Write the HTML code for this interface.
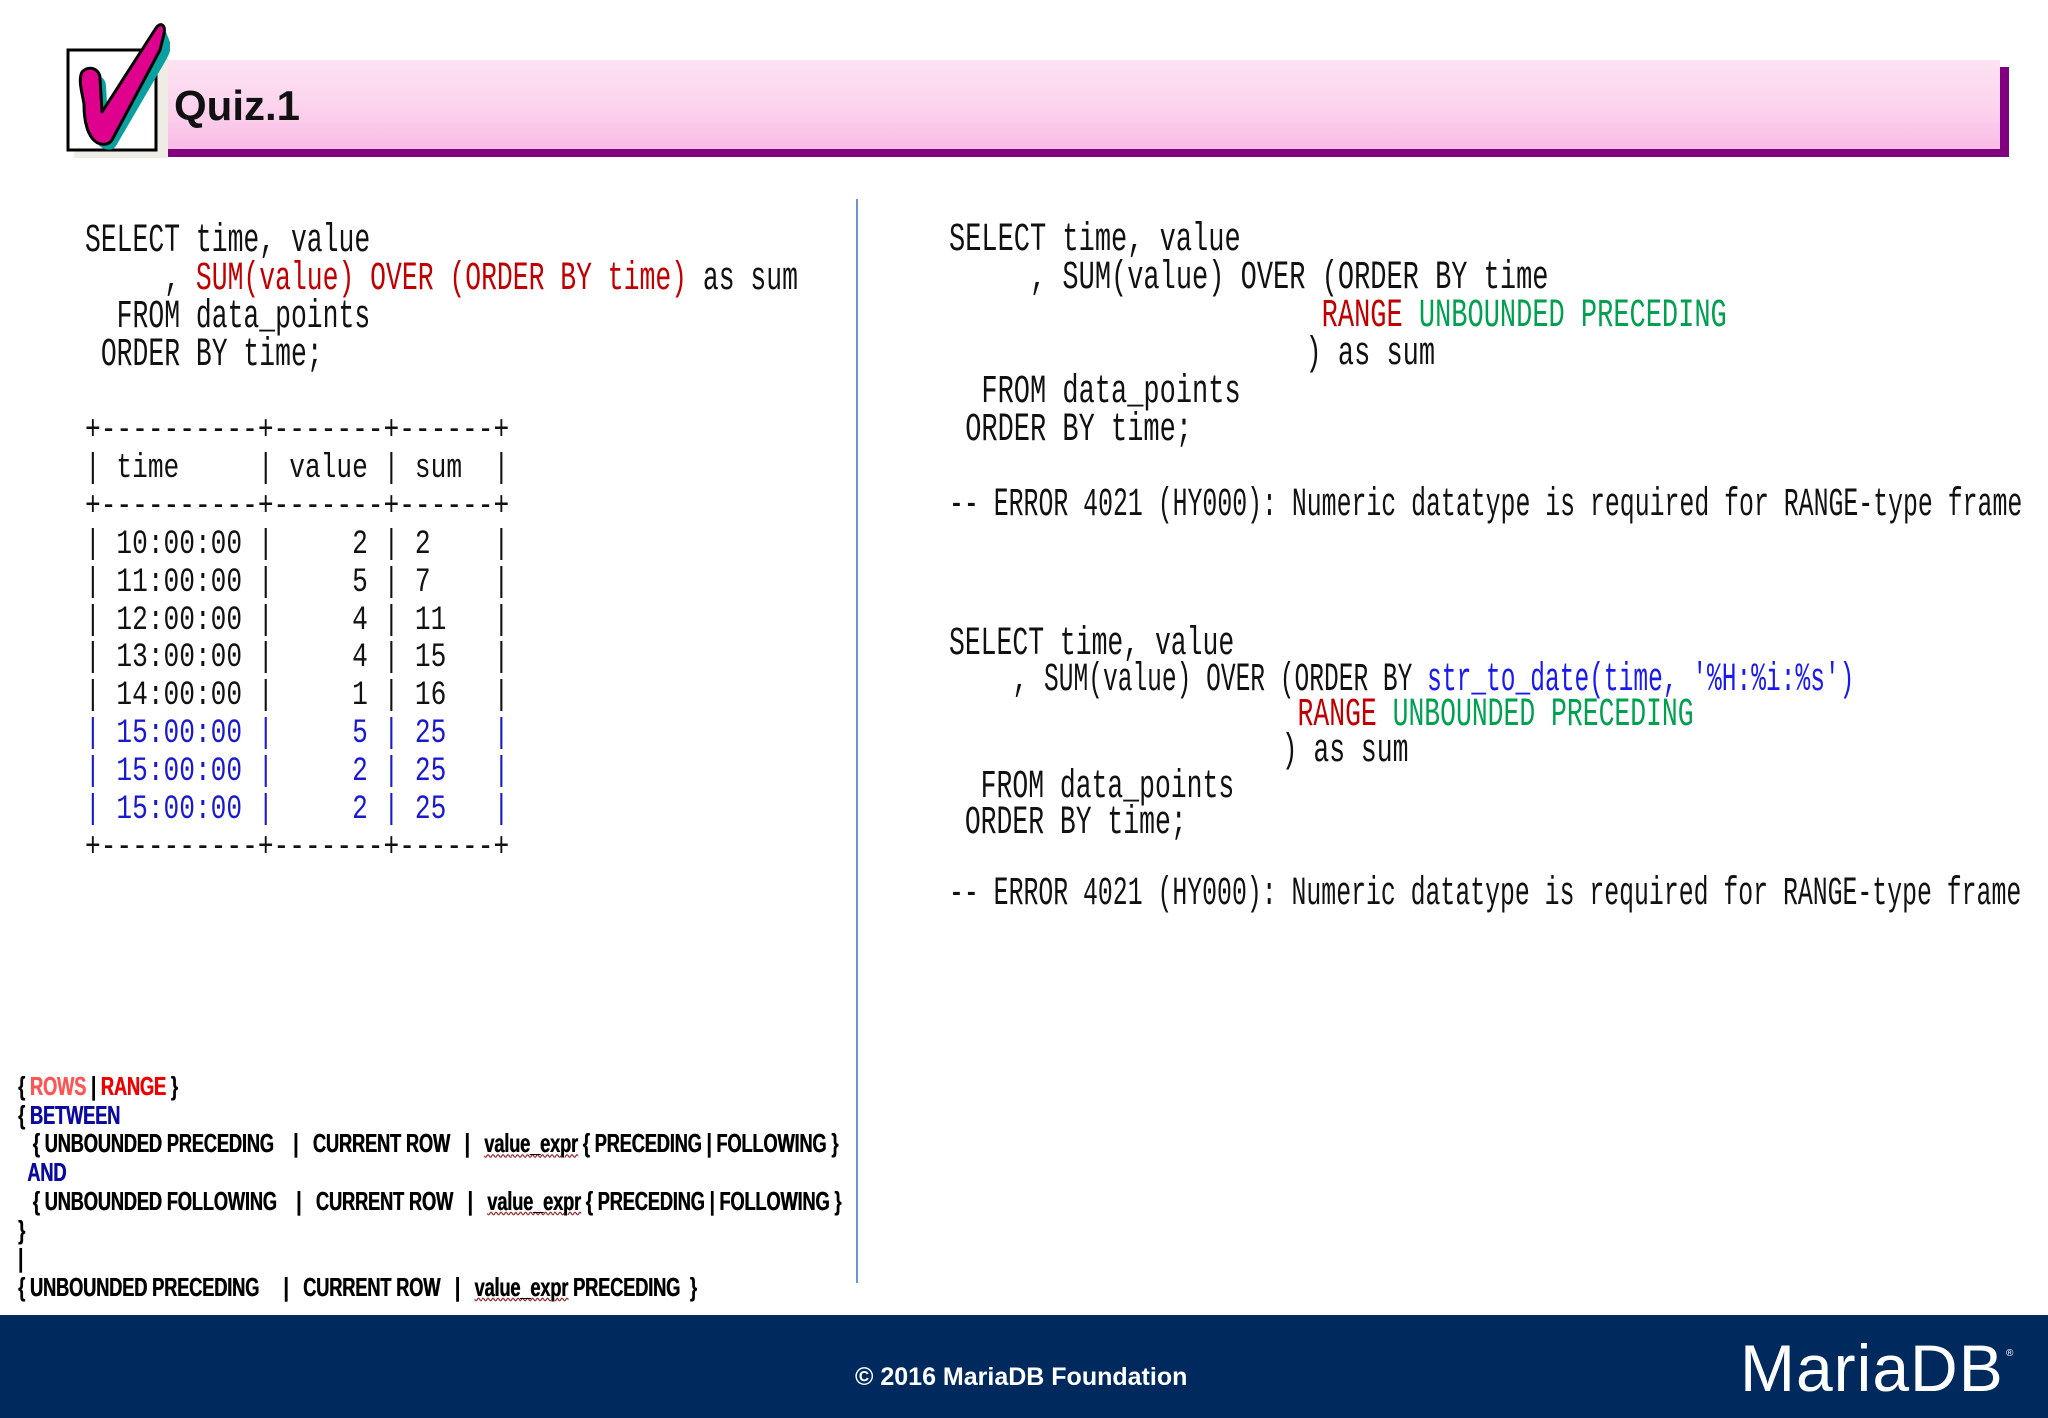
<!DOCTYPE html>
<html><head><meta charset="utf-8"><style>
html,body{margin:0;padding:0;background:#fff;}
body{width:2048px;height:1418px;position:relative;overflow:hidden;font-family:"Liberation Sans",sans-serif;}
.abs{position:absolute;}
pre{margin:0;font-family:"Liberation Mono","Noto Sans CJK SC",monospace;color:#111;white-space:pre;transform-origin:0 0;}
.code{font-size:40px;line-height:37.9px;transform:scaleX(0.66);}
.code1{font-size:40px;line-height:37.9px;transform:scaleX(0.675);}
.code2{font-size:40px;line-height:35.7px;transform:scaleX(0.66);}
.tbl{font-size:34px;line-height:37.9px;transform:scaleX(0.77);font-family:"Liberation Mono",monospace;}
.r{color:#c00000}.g{color:#00a050}.b{color:#1a1aee}.tb{color:#1a1acc}
.syn{font-family:"Liberation Sans",sans-serif;font-weight:bold;font-size:26px;line-height:28.7px;transform:scaleX(0.705);transform-origin:0 0;white-space:pre;color:#000;letter-spacing:-0.3px;text-shadow:0.6px 0 0 currentColor}
.u{text-decoration:underline;text-decoration-color:#c33;text-decoration-style:wavy;text-decoration-thickness:1px}
</style></head><body>

<div class="abs" style="left:160px;top:67px;width:1849px;height:90px;background:#800080;"></div>
<div class="abs" style="left:154px;top:60px;width:1846px;height:89px;background:linear-gradient(#fde2f2,#fcd6ee 45%,#f9bde6);"></div>
<div class="abs" style="left:174px;top:82px;font-size:42px;font-weight:bold;color:#111;">Quiz.1</div>
<svg class="abs" style="left:20px;top:20px" width="150" height="140" viewBox="0 0 150 140">
  <rect x="54" y="38" width="94" height="100" fill="#eeece4"/>
  <rect x="48" y="30" width="88" height="100" fill="#fff" stroke="#000" stroke-width="3"/>
  <path d="M70 60 C78 52 86 58 86 66 L88 100 L146 12 L150 22 C152 30 148 36 146 40 L96 126 C92 132 82 130 78 124 C72 116 72 100 72 90 Z" fill="#0aa0a0"/>
  <path d="M62 52 C70 44 80 50 80 58 L82 92 L136 8 C140 2 146 4 144 14 L140 30 L92 120 C88 126 78 126 72 118 C66 110 64 96 64 84 C62 72 58 60 62 52 Z" fill="#e0008e" stroke="#000" stroke-width="3" stroke-linejoin="round"/>
</svg>

<div class="abs" style="left:856px;top:199px;width:2px;height:1084px;background:#6b95cf;"></div>

<pre class="abs code" style="left:85px;top:223px;">SELECT time, value
     , <span class="r">SUM(value) OVER (ORDER BY time)</span> as sum
  FROM data_points
 ORDER BY time;</pre>
<pre class="abs tbl" style="left:85px;top:413px;">+----------+-------+------+
| time     | value | sum  |
+----------+-------+------+
| 10:00:00 |     2 | 2    |
| 11:00:00 |     5 | 7    |
| 12:00:00 |     4 | 11   |
| 13:00:00 |     4 | 15   |
| 14:00:00 |     1 | 16   |
<span class="tb">| 15:00:00 |     5 | 25   |
| 15:00:00 |     2 | 25   |
| 15:00:00 |     2 | 25   |</span>
+----------+-------+------+</pre>

<pre class="abs code1" style="left:949px;top:222px;">SELECT time, value
     , SUM(value) OVER (ORDER BY time
                       <span class="r">RANGE</span> <span class="g">UNBOUNDED PRECEDING</span>
                      ) as sum
  FROM data_points
 ORDER BY time;

<span style="display:inline-block;transform:scaleX(0.92);transform-origin:0 0">-- ERROR 4021 (HY000): Numeric datatype is required for RANGE-type frame</span></pre>

<pre class="abs code2" style="left:949px;top:627px;">SELECT time, value
    , <span style="display:inline-block;transform:scaleX(0.93);transform-origin:0 0">SUM(value) OVER (ORDER BY <span class="b">str_to_date(time, '%H:%i:%s')</span></span>
                      <span class="r">RANGE</span> <span class="g">UNBOUNDED PRECEDING</span>
                     ) as sum
  FROM data_points
 ORDER BY time;

<span style="display:inline-block;transform:scaleX(0.94);transform-origin:0 0">-- ERROR 4021 (HY000): Numeric datatype is required for RANGE-type frame</span></pre>

<div class="abs syn" style="left:18px;top:1072px;">{ <span style="color:#ff5555">ROWS</span> | <span style="color:#ee0000">RANGE</span> }
{ <span style="color:#0a0aa0">BETWEEN</span>
   { UNBOUNDED PRECEDING    |   CURRENT ROW   |   <span class="u">value_expr</span> { PRECEDING | FOLLOWING }
  <span style="color:#0a0aa0">AND</span>
   { UNBOUNDED FOLLOWING    |   CURRENT ROW   |   <span class="u">value_expr</span> { PRECEDING | FOLLOWING }
}
|
{ UNBOUNDED PRECEDING     |   CURRENT ROW   |   <span class="u">value_expr</span> PRECEDING  }</div>

<div class="abs" style="left:0;top:1315px;width:2048px;height:103px;background:#002a5e;"></div>
<div class="abs" style="left:855px;top:1363px;font-size:25px;font-weight:bold;color:#fff;">© 2016 MariaDB Foundation</div>
<div class="abs" style="left:1740px;top:1330px;font-size:66px;color:#fff;letter-spacing:1px;">MariaDB</div>
<div class="abs" style="left:2006px;top:1348px;font-size:10px;color:#fff;">®</div>
</body></html>
